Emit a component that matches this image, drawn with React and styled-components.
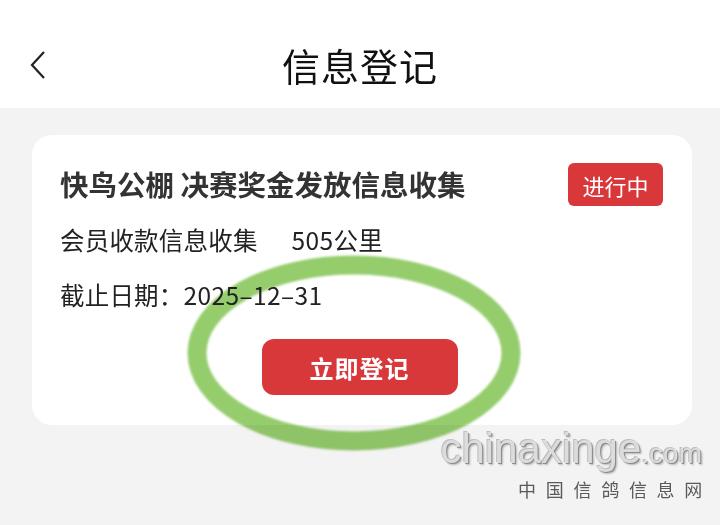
import React from 'react'
import styled, { createGlobalStyle } from 'styled-components'

const GlobalStyle = createGlobalStyle`
  html, body {
    margin: 0;
    padding: 0;
    background: #f3f3f3;
  }
  body {
    font-family: 'Noto Sans CJK SC', 'Noto Sans', sans-serif;
  }
`

const Page = styled.div`
  position: relative;
  width: 720px;
  height: 525px;
  overflow: hidden;
  background: #f3f3f3;
`

const Header = styled.header`
  height: 108px;
  box-sizing: border-box;
  padding-top: 22px;
  background: #fff;
  display: grid;
  grid-template-columns: 1fr auto 1fr;
  align-items: center;
`

const Back = styled.button`
  justify-self: start;
  display: flex;
  align-items: center;
  margin: 0 0 0 30px;
  padding: 0;
  border: 0;
  background: none;
`

const Title = styled.h1`
  margin: 0;
  font-size: 38px;
  font-weight: 400;
  color: #111;
  line-height: 1;
  letter-spacing: 1px;
`

const Content = styled.main`
  padding: 27px 28px 0 32px;
`

const Card = styled.section`
  height: 290px;
  box-sizing: border-box;
  background: #fff;
  border-radius: 20px;
  padding: 28px 29px 0 28px;
  display: flex;
  flex-direction: column;
`

const TopRow = styled.div`
  display: flex;
  justify-content: space-between;
  align-items: center;
  height: 43px;
`

const CardTitle = styled.h2`
  margin: 0;
  font-size: 28.5px;
  font-weight: 700;
  color: #333;
  line-height: 1;
`

const Badge = styled.span`
  display: flex;
  align-items: center;
  justify-content: center;
  width: 95px;
  height: 43px;
  border-radius: 6px;
  background: #d9383b;
  color: #fff;
  font-size: 22px;
`

const Line = styled.p`
  position: relative;
  z-index: 2;
  margin: ${(p) => p.$top}px 0 0;
  font-size: 24.5px;
  letter-spacing: 0.2px;
  line-height: 30px;
  color: #222;
`

const Gap = styled.span`
  display: inline-block;
  width: ${(p) => p.$w}px;
`

const Num = styled.span`
  letter-spacing: 0.4px;
`

const Action = styled.button`
  align-self: center;
  margin: 29px 4px 0 0;
  width: 196px;
  height: 56px;
  border: 0;
  border-radius: 12px;
  background: #d9383b;
  color: #fff;
  font-family: inherit;
  font-size: 24px;
  font-weight: 700;
  letter-spacing: 1px;
`

const Ring = styled.svg`
  position: absolute;
  left: 0;
  top: 0;
  pointer-events: none;
  mix-blend-mode: multiply;
`

const Watermark = styled.div`
  position: absolute;
  right: 18px;
  bottom: 26px;
  display: flex;
  flex-direction: column;
  align-items: flex-end;
`

const Brand = styled.div`
  font-family: 'Liberation Sans', Arial, sans-serif;
  font-size: 42px;
  line-height: 42px;
  color: #dcdcdc;
  text-shadow: 1px 1px 0 #8a8a8a, -1px -1px 0 #bdbdbd, 2px 2px 2px rgba(0, 0, 0, 0.25);
`

const Dot = styled.span`
  font-size: 28px;
`

const Cn = styled.div`
  margin-top: 4px;
  margin-right: -10px;
  font-size: 18px;
  letter-spacing: 9.7px;
  color: #5a5a5a;
  line-height: 20px;
`

export default function App() {
  return (
    <Page>
      <GlobalStyle />
      <Header>
        <Back aria-label="返回">
          <svg width="16" height="28" viewBox="0 0 16 28">
            <path d="M14 1 L2 14 L14 27" fill="none" stroke="#222" strokeWidth="2.2" />
          </svg>
        </Back>
        <Title>信息登记</Title>
        <span />
      </Header>
      <Content>
        <Card>
          <TopRow>
            <CardTitle>快鸟公棚 决赛奖金发放信息收集</CardTitle>
            <Badge>进行中</Badge>
          </TopRow>
          <Line $top={19}>
            会员收款信息收集<Gap $w={34} /><Num>505</Num>公里
          </Line>
          <Line $top={25}>
            截止日期：<Num>2025–12–31</Num>
          </Line>
          <Action>立即登记</Action>
        </Card>
      </Content>
      <Ring width="720" height="525" viewBox="0 0 720 525">
        <defs>
          <filter id="soft" x="-10%" y="-10%" width="120%" height="120%">
            <feGaussianBlur stdDeviation="1.2" />
          </filter>
        </defs>
        <ellipse
          cx="354"
          cy="353"
          rx="157"
          ry="88"
          fill="none"
          stroke="#95cd6d"
          strokeWidth="19"
          filter="url(#soft)"
        />
      </Ring>
      <Watermark>
        <Brand>
          chinaxinge<Dot>.com</Dot>
        </Brand>
        <Cn>中国信鸽信息网</Cn>
      </Watermark>
    </Page>
  )
}
